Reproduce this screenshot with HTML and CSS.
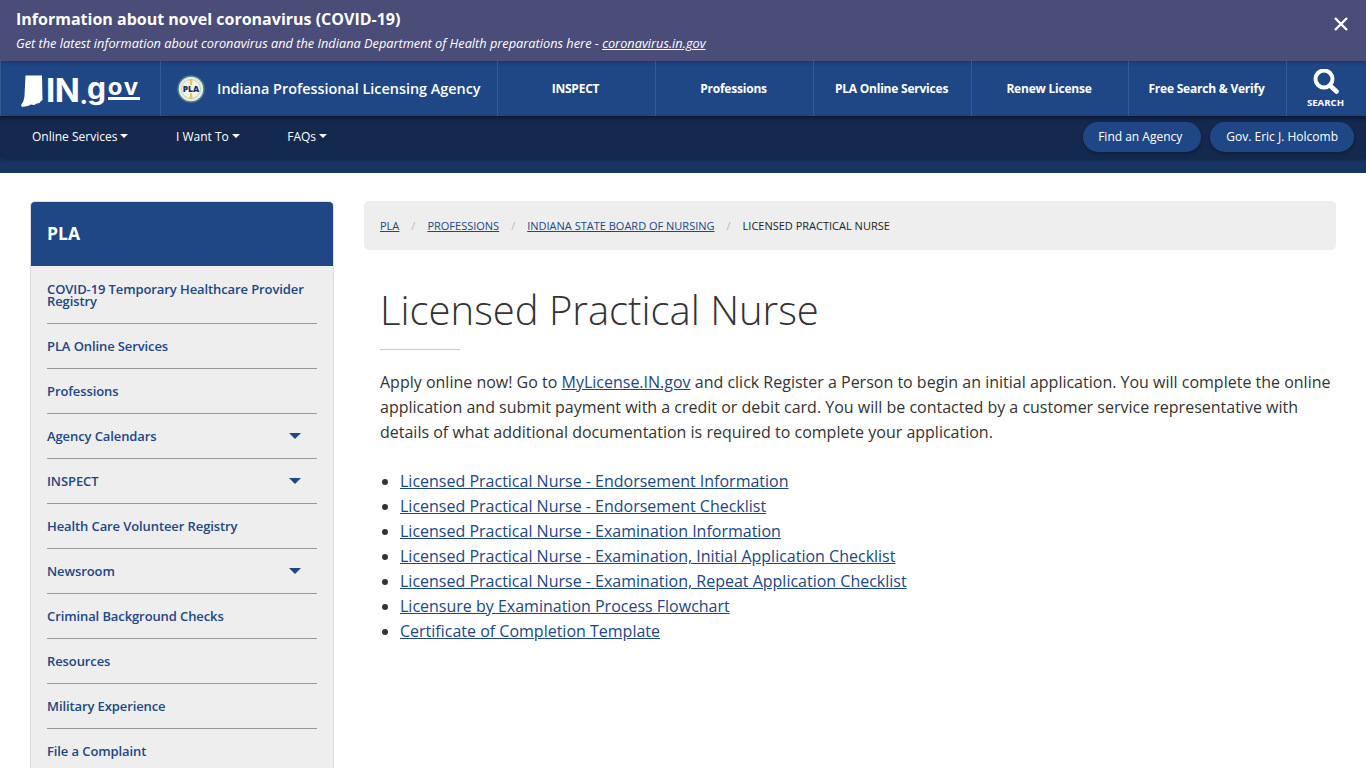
FILE: index.html
```html
<!DOCTYPE html>
<html lang="en">
<head>
<meta charset="utf-8">
<title>Licensed Practical Nurse</title>
<link rel="stylesheet" href="styles.css">
</head>
<body>
<div class="alert">
  <div class="alert-text">
    <div class="alert-title">Information about novel coronavirus (COVID-19)</div>
    <div class="alert-sub">Get the latest information about coronavirus and the Indiana Department of Health preparations here - <a href="#">coronavirus.in.gov</a></div>
  </div>
  <svg class="alert-close" width="16" height="16" viewBox="0 0 16 16"><path d="M2 2L14 14M14 2L2 14" stroke="#fff" stroke-width="2.4" fill="none"/></svg>
</div>
<header class="topbar">
  <a class="logo" href="#">
    <svg class="state" width="22" height="32" viewBox="0 0 22 32"><path d="M4.500 0.500H21L21.500 25L20 26L18.500 28L16 28.500L13 30L10 29.500L7 31L1 32L0 30L2 27L3 24L3.500 21Z" fill="#fff"/></svg>
    <span class="logo-in">IN</span><span class="logo-dot">.</span><span class="logo-g">g</span><span class="logo-ov">ov</span>
  </a>
  <a class="agency" href="#">
    <svg class="seal" width="28" height="28" viewBox="0 0 28 28"><circle cx="14" cy="14" r="13" fill="#e8ebe0" stroke="#4f7f86" stroke-width="1.500"/><circle cx="14" cy="14" r="9.500" fill="#f4f4ea" stroke="#c9cdb4" stroke-width="1"/><path d="M12.500 4H15.500L15 10H13ZM13 18H15L15.500 24H12.500Z" fill="#e3c95a"/><text x="14" y="17" text-anchor="middle" class="seal-text">PLA</text></svg>
    <span>Indiana Professional Licensing Agency</span>
  </a>
  <a class="nav-item" href="#">INSPECT</a>
  <a class="nav-item" href="#">Professions</a>
  <a class="nav-item" href="#">PLA Online Services</a>
  <a class="nav-item nav-short" href="#">Renew License</a>
  <a class="nav-item" href="#">Free Search &amp; Verify</a>
  <a class="nav-search" href="#">
    <svg width="26" height="25" viewBox="0 0 26 25"><circle cx="11" cy="10" r="8.500" stroke="#fff" stroke-width="4" fill="none"/><path d="M17 16.500L23.500 22.500" stroke="#fff" stroke-width="4.500" stroke-linecap="round"/></svg>
    <span>SEARCH</span>
  </a>
</header>
<nav class="subnav">
  <div class="subnav-left">
    <a href="#">Online Services<i class="caret"></i></a>
    <a href="#">I Want To<i class="caret"></i></a>
    <a href="#">FAQs<i class="caret"></i></a>
  </div>
  <div class="subnav-right">
    <a class="pill pill-wide" href="#">Find an Agency</a>
    <a class="pill" href="#">Gov. Eric J. Holcomb</a>
  </div>
</nav>
<div class="strip"></div>
<div class="page">
  <aside class="side">
    <div class="side-head">PLA</div>
    <ul class="side-list">
      <li class="two"><a href="#">COVID-19 Temporary Healthcare Provider Registry</a></li>
      <li><a href="#">PLA Online Services</a></li>
      <li><a href="#">Professions</a></li>
      <li><a href="#">Agency Calendars</a><i class="tri"></i></li>
      <li><a href="#">INSPECT</a><i class="tri"></i></li>
      <li><a href="#">Health Care Volunteer Registry</a></li>
      <li><a href="#">Newsroom</a><i class="tri"></i></li>
      <li><a href="#">Criminal Background Checks</a></li>
      <li><a href="#">Resources</a></li>
      <li><a href="#">Military Experience</a></li>
      <li><a href="#">File a Complaint</a></li>
    </ul>
  </aside>
  <main class="main">
    <ol class="crumbs">
      <li><a href="#">PLA</a></li>
      <li class="sep">/</li>
      <li><a href="#">PROFESSIONS</a></li>
      <li class="sep">/</li>
      <li><a href="#">INDIANA STATE BOARD OF NURSING</a></li>
      <li class="sep">/</li>
      <li>LICENSED PRACTICAL NURSE</li>
    </ol>
    <div class="content">
      <h1>Licensed Practical Nurse</h1>
      <p>Apply online now! Go to <a href="#">MyLicense.IN.gov</a> and click Register a Person to begin an initial application. You will complete the online application and submit payment with a credit or debit card. You will be contacted by a customer service representative with details of what additional documentation is required to complete your application.</p>
      <ul class="links">
        <li><a href="#">Licensed Practical Nurse - Endorsement Information</a></li>
        <li><a href="#">Licensed Practical Nurse - Endorsement Checklist</a></li>
        <li><a href="#">Licensed Practical Nurse - Examination Information</a></li>
        <li><a href="#">Licensed Practical Nurse - Examination, Initial Application Checklist</a></li>
        <li><a href="#">Licensed Practical Nurse - Examination, Repeat Application Checklist</a></li>
        <li><a href="#">Licensure by Examination Process Flowchart</a></li>
        <li><a href="#">Certificate of Completion Template</a></li>
      </ul>
    </div>
  </main>
</div>
</body>
</html>
```
FILE: styles.css
```css
* { box-sizing: border-box; }
html, body { margin: 0; padding: 0; height: 768px; overflow: hidden; background: #fff; }
body { font-family: "Open Sans", sans-serif; color: #333; }
a { color: inherit; text-decoration: none; }
ul, ol { margin: 0; padding: 0; list-style: none; }

.alert { height: 61px; background: #4a4d78; color: #fff; display: flex; justify-content: space-between; padding: 8px 17px 0 16px; }
.alert-title { font-size: 16px; font-weight: 700; line-height: 22px; }
.alert-sub { font-size: 12.77px; font-style: italic; line-height: 18px; margin-top: 4px; }
.alert-sub a { text-decoration: underline; }
.alert-close { margin-top: 8px; }

.topbar { height: 55px; background: #204785; display: flex; color: #fff; box-shadow: inset 0 4px 4px -3px rgba(0,0,0,.3); border-left: 1px solid #36598f; }
.logo { width: 160px; flex: none; display: flex; align-items: center; padding-left: 20px; border-right: 1px solid #36598f; font-family: "Inter", "Open Sans", sans-serif; }
.state { flex: none; margin-top: 5px; }
.logo-in { font-size: 33px; font-weight: 700; letter-spacing: -0.5px; margin-left: 3px; line-height: 32px; margin-top: 3px; }
.logo-dot { font-size: 24px; font-weight: 800; margin-top: 13px; }
.logo-g { font-size: 30px; font-weight: 700; margin-top: -2px; margin-left: -1px; }
.logo-ov { font-size: 24px; font-weight: 700; letter-spacing: 1.5px; line-height: 21px; border-bottom: 3px solid #fff; margin: -2px 0 0 2px; }
.agency { width: 337px; flex: none; display: flex; align-items: center; gap: 12px; padding-left: 16px; font-size: 14.4px; font-weight: 600; border-right: 1px solid #36598f; white-space: nowrap; }
.seal { flex: none; }
.seal-text { font-size: 8.5px; font-weight: 800; fill: #17305c; font-family: "Open Sans", sans-serif; }
.nav-item { width: 158px; flex: none; display: flex; align-items: center; justify-content: center; padding-right: 2px; font-size: 12px; font-weight: 700; letter-spacing: -0.22px; border-right: 1px solid #36598f; white-space: nowrap; }
.nav-short { width: 157px; }
.nav-search { flex: 1; display: flex; flex-direction: column; align-items: center; padding-right: 2px; font-size: 9.6px; font-weight: 700; padding-top: 8px; }
.nav-search span { margin-top: 3px; line-height: 12px; }

.subnav { height: 42px; background: #15294f; display: flex; justify-content: space-between; align-items: center; padding: 0 12px 0 32px; color: #fff; font-size: 12px; box-shadow: inset 0 6px 5px -4px rgba(0,0,0,.45), 0 2px 4px rgba(0,0,0,.3); position: relative; }
.subnav-left { display: flex; gap: 47.5px; }
.subnav-left a { display: flex; align-items: center; padding-bottom: 2px; }
.caret { width: 0; height: 0; margin-left: 3px; border-left: 4.500px solid transparent; border-right: 4.500px solid transparent; border-top: 4px solid #fff; }
.subnav-right { display: flex; gap: 9px; }
.pill { height: 30px; border-radius: 15px; background: #204785; display: flex; align-items: center; padding: 0 16px 2px; box-shadow: 0 2px 4px rgba(0,0,0,.3); }
.pill-wide { padding: 0 19px 2px 15px; }

.strip { height: 15px; background: #193563; }

.page { display: flex; gap: 30px; padding: 28px 30px 0; }
.side { width: 304px; flex: none; background: #eee; border: 1px solid #ddd; border-radius: 5px 5px 0 0; height: 700px; }
.side-head { height: 64px; background: #204785; color: #fff; font-size: 17.5px; font-weight: 700; padding: 19px 16px 0; line-height: 24px; border-radius: 4px 4px 0 0; }
.side-list { padding: 0 16px 0 16px; }
.side-list li { height: 45px; border-bottom: 1px solid #999; display: flex; align-items: center; justify-content: space-between; color: #204785; font-size: 13px; font-weight: 600; letter-spacing: -0.1px; line-height: 12px; }
.side-list li.two { height: 58px; }
.side-list li:last-child { border-bottom-color: transparent; }
.tri { width: 0; height: 0; margin-right: 16px; border-left: 6px solid transparent; border-right: 6px solid transparent; border-top: 6px solid #204785; }

.main { flex: 1; min-width: 0; }
.crumbs { height: 49px; background: #eee; border-radius: 5px; display: flex; align-items: center; padding: 0 16px; font-size: 11px; color: #222; }
.crumbs a { color: #204785; text-decoration: underline; }
.sep { color: #bbb; margin: 0 12px; }
.content { padding: 0 0 0 16px; font-size: 16px; line-height: 25px; }
h1 { margin: 33px 0 0; font-size: 40px; font-weight: 300; line-height: 54px; padding-bottom: 13px; color: #333; position: relative; }
h1::after { content: ""; position: absolute; left: 0; bottom: 0; width: 80px; height: 1px; background: #ccc; }
.content p { margin: 20px 0 24px; }
.content a { color: #204785; text-decoration: underline; }
.links { list-style: disc; padding-left: 20px; }
```
